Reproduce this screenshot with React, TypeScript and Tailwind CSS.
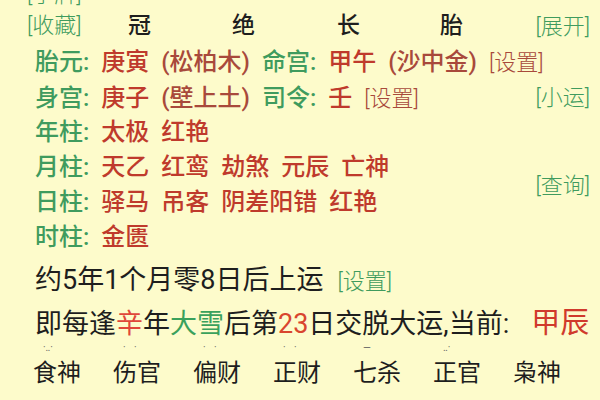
const green = "text-[#3f9b5e]";
const red = "text-[#bf3a2c]";
const brown = "text-[#a8493b]";

function Label({ children }: { children: string }) {
  return <span className={green}>{children}</span>;
}

function Tag({ children, className }: { children: string; className?: string }) {
  return <span className={`font-light text-[22px] ${className ?? green}`}>{children}</span>;
}

function Line({ children, className }: { children: React.ReactNode; className?: string }) {
  return <div className={`whitespace-pre leading-[35px] h-[35px] ${className ?? ""}`}>{children}</div>;
}

const tenGods = ["食神", "伤官", "偏财", "正财", "七杀", "正官", "枭神"];
const marks = ["·‥·", "· ·", "· ·", "· ·", "—", "‥·", ""];
const bottom = [
  { t: "丁亥", c: "text-[#222]" },
  { t: "乙巳", c: "text-[#222]" },
  { t: "戊申", c: "text-[#222]" },
  { t: "己未", c: "text-[#222]" },
  { t: "丙寅", c: "text-[#c0392b]" },
  { t: "庚戌", c: "text-[#222]" },
  { t: "辛卯", c: "text-[#222]" },
];

export default function App() {
  return (
    <div
      className="w-[600px] h-[400px] overflow-hidden bg-[#fdfbcb] text-[24px] text-[#1e1e1e] font-medium [word-spacing:6px]"
      style={{ fontFamily: "Roboto, 'Noto Sans CJK SC', 'Noto Sans', sans-serif" }}
    >
      <div className="flex items-center h-[28px] mt-[-20px] pl-[27px]">
        <Tag>[手牌]</Tag>
      </div>

      <div className="flex items-center h-[37px] pl-[27px] pr-[10px] text-[23px]">
        <span className="w-[101px]"><Tag>[收藏]</Tag></span>
        <span className="w-[104px]">冠</span>
        <span className="w-[105px]">绝</span>
        <span className="w-[103px]">长</span>
        <span className="flex-1">胎</span>
        <Tag>[展开]</Tag>
      </div>

      <Line className="pl-[35px]">
        <Label>胎元:</Label> <span className={red}>庚寅</span> <span className={brown}>(松柏木)</span>{" "}
        <Label>命宫:</Label> <span className={red}>甲午</span> <span className={brown}>(沙中金)</span>{" "}
        <Tag className={brown}>[设置]</Tag>
      </Line>

      <div className="flex items-center h-[35px] pl-[35px] pr-[10px]">
        <div className="flex-1 whitespace-pre">
          <Label>身宫:</Label> <span className={red}>庚子</span> <span className={brown}>(壁上土)</span>{" "}
          <Label>司令:</Label> <span className={red}>壬</span> <Tag className={brown}>[设置]</Tag>
        </div>
        <Tag>[小运]</Tag>
      </div>

      <Line className="pl-[35px]">
        <Label>年柱:</Label> <span className={red}>太极 红艳</span>
      </Line>

      <div className="flex items-center pr-[10px]">
        <div className="flex-1">
          <Line className="pl-[35px]">
            <Label>月柱:</Label> <span className={red}>天乙 红鸾 劫煞 元辰 亡神</span>
          </Line>
          <Line className="pl-[35px]">
            <Label>日柱:</Label> <span className={red}>驿马 吊客 阴差阳错 红艳</span>
          </Line>
        </div>
        <Tag>[查询]</Tag>
      </div>

      <Line className="pl-[35px]">
        <Label>时柱:</Label> <span className={red}>金匮</span>
      </Line>

      <Line className="mt-[8px] pl-[35px] text-[27px] font-normal [word-spacing:0px]">
        <span>约5年1个月零8日后上运</span>
        <Tag className={`${green} ml-[14px]`}>[设置]</Tag>
      </Line>

      <Line className="mt-[8px] pl-[35px] text-[27px] font-normal [word-spacing:0px]">
        <span>即每逢</span>
        <span className="text-[#e0473a]">辛</span>
        <span>年</span>
        <span className="text-[#3aa15c]">大雪</span>
        <span>后第</span>
        <span className="text-[#d9452e]">23</span>
        <span>日交脱大运,当前:</span>
        <span className="ml-[22px] text-[29px] text-[#d03a2c]">甲辰</span>
      </Line>

      <div className="flex h-[14px] pl-[35px] text-[10px] leading-[14px] text-[#666] font-normal">
        {marks.map((m, i) => (
          <span key={i} className="w-[80px] pl-[8px]">{m}</span>
        ))}
      </div>

      <div className="flex h-[35px] items-center pl-[33px] whitespace-nowrap font-normal">
        {tenGods.map((g) => (
          <span key={g} className="w-[80px] shrink-0">{g}</span>
        ))}
      </div>

      <div className="flex h-[35px] mt-[5px] items-center pl-[33px] whitespace-nowrap font-normal">
        {bottom.map((b) => (
          <span key={b.t} className={`w-[80px] shrink-0 ${b.c}`}>{b.t}</span>
        ))}
      </div>
    </div>
  );
}
